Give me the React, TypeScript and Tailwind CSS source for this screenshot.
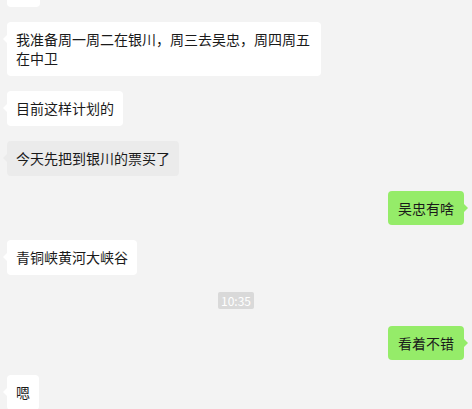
type Msg =
  | { kind: "in"; text: string; bg?: string }
  | { kind: "out"; text: string }
  | { kind: "time"; text: string };

const messages: Msg[] = [
  { kind: "in", text: "我准备周一周二在银川，周三去吴忠，周四周五在中卫" },
  { kind: "in", text: "目前这样计划的" },
  { kind: "in", text: "今天先把到银川的票买了", bg: "gray" },
  { kind: "out", text: "吴忠有啥" },
  { kind: "in", text: "青铜峡黄河大峡谷" },
  { kind: "time", text: "10:35" },
  { kind: "out", text: "看着不错" },
  { kind: "in", text: "嗯" },
];

function Incoming({ text, gray }: { text: string; gray?: boolean }) {
  return (
    <div className="flex justify-start pl-[7px]">
      <div
        className={`relative max-w-[314px] rounded-[4px] px-[9px] py-[8px] text-[14px] leading-[19px] text-[#1a1a1a] ${
          gray ? "bg-[#ebebeb]" : "bg-white"
        }`}
      >
        <span
          className={`absolute left-[-4px] top-[13px] h-0 w-0 border-y-[4px] border-r-[4px] border-y-transparent ${
            gray ? "border-r-[#ebebeb]" : "border-r-white"
          }`}
        />
        {text}
      </div>
    </div>
  );
}

function Outgoing({ text }: { text: string }) {
  return (
    <div className="flex justify-end pr-[8px]">
      <div className="relative rounded-[4px] bg-[#95ec69] px-[10px] py-[8px] text-[14px] leading-[18px] text-[#1a1a1a]">
        {text}
        <span className="absolute right-[-4px] top-[13px] h-0 w-0 border-y-[4px] border-l-[4px] border-y-transparent border-l-[#95ec69]" />
      </div>
    </div>
  );
}

export default function App() {
  return (
    <div
      className="h-[409px] w-[472px] overflow-hidden bg-[#f3f3f3]"
      style={{ fontFamily: '"Microsoft YaHei", "Noto Sans CJK SC", sans-serif' }}
    >
      <div className="flex flex-col gap-[15px]">
        {/* previous bubble, cut off at the top */}
        <div className="-mt-[28px] pl-[7px]">
          <div className="h-[35px] w-[33px] rounded-[4px] bg-white" />
        </div>
        {messages.map((m, i) =>
          m.kind === "time" ? (
            <div key={i} className="flex justify-center py-[2px]">
              <span className="rounded-[2px] bg-[#d9d9d9] px-[3px] text-[12px] leading-[17px] text-white">
                {m.text}
              </span>
            </div>
          ) : m.kind === "out" ? (
            <Outgoing key={i} text={m.text} />
          ) : (
            <Incoming key={i} text={m.text} gray={m.bg === "gray"} />
          )
        )}
      </div>
    </div>
  );
}
